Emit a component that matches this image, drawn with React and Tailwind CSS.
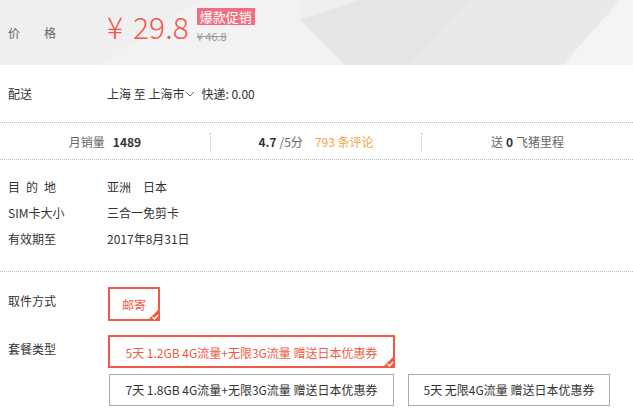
import React from "react";

function Check() {
  return (
    <svg className="absolute right-[-2px] bottom-[-2px]" width="13" height="13" viewBox="0 0 13 13">
      <polygon points="13,0 13,13 0,13" fill="#f05a45" />
      <polyline points="5.5,9 7.5,11 11,7" fill="none" stroke="#fff" strokeWidth="1.3" />
    </svg>
  );
}

export default function App() {
  return (
    <div className="w-[633px] h-[412px] bg-white overflow-hidden [font-family:'Noto_Sans_CJK_SC','Microsoft_YaHei',sans-serif] text-[12px] text-[#333]">
      {/* price header */}
      <div className="relative h-[65px] bg-[#efefef]">
        <svg className="absolute inset-0" width="633" height="65" viewBox="0 0 633 65">
          <polygon points="100,65 200,0 300,0 300,20 345,65" fill="#f2f2f2" />
          <polygon points="300,20 360,0 470,0 410,65 345,65" fill="#e5e5e5" />
          <polygon points="470,0 620,0 563,65 410,65" fill="#e9e9e9" />
          <polygon points="620,0 633,0 633,65 563,65" fill="#f4f4f4" />
        </svg>
        <div className="relative flex items-center h-full pl-2">
          <div className="w-[99px] text-[#666] flex">
            <span>价</span>
            <span className="ml-6">格</span>
          </div>
          <div className="flex items-center mb-[14px]">
            <div className="flex items-center text-[#f2584a] text-[30px] font-light leading-none">
              <span>¥</span>
              <span className="ml-[10px]">29.8</span>
            </div>
            <div className="ml-[8px] flex flex-col items-start">
              <span className="bg-[#ef6f80] text-white text-[13px] leading-[17px] px-[3px]">爆款促销</span>
              <span className="text-[11px] text-[#999] line-through mt-[4px] leading-[14px]">¥ 46.8</span>
            </div>
          </div>
        </div>
      </div>

      {/* delivery */}
      <div className="flex items-center h-[58px] pl-2 border-b border-dotted border-[#bbb]">
        <div className="w-[99px] text-[#333]">配送</div>
        <div className="flex items-center text-[#333]">
          <span>上海 至 上海市</span>
          <svg width="10" height="10" viewBox="0 0 10 10" className="ml-[1px]">
            <polyline points="1,3 5,7 9,3" fill="none" stroke="#666" strokeWidth="1" />
          </svg>
          <span className="ml-[6px]">快递: 0.00</span>
        </div>
      </div>

      {/* stats */}
      <div className="grid grid-cols-3 h-[37px] border-b border-dotted border-[#bbb] text-[#666]">
        <div className="flex items-center justify-center border-r border-dotted border-[#bbb] my-[10px]">
          <span>月销量</span>
          <span className="ml-[8px] font-bold text-[#333]">1489</span>
        </div>
        <div className="flex items-center justify-center border-r border-dotted border-[#bbb] my-[10px]">
          <span className="font-bold text-[#333]">4.7</span>
          <span className="ml-[3px]">/5分</span>
          <span className="ml-[12px] text-[#f5a33a]">793 条评论</span>
        </div>
        <div className="flex items-center justify-center my-[10px]">
          <span>送</span>
          <span className="mx-[3px] font-bold text-[#333]">0</span>
          <span>飞猪里程</span>
        </div>
      </div>

      {/* info */}
      <div className="pt-[14px] pb-[19px] pl-2 border-b border-dotted border-[#bbb] leading-[26px]">
        <div className="flex">
          <div className="w-[99px] text-[#333] flex gap-[6px]"><span>目</span><span>的</span><span>地</span></div>
          <div className="flex gap-[12px]"><span>亚洲</span><span>日本</span></div>
        </div>
        <div className="flex">
          <div className="w-[99px] text-[#333]">SIM卡大小</div>
          <div>三合一免剪卡</div>
        </div>
        <div className="flex">
          <div className="w-[99px] text-[#333]">有效期至</div>
          <div>2017年8月31日</div>
        </div>
      </div>

      {/* options */}
      <div className="pt-[15px] pl-2">
        <div className="flex">
          <div className="w-[100px] mt-[6px] leading-[16px]">取件方式</div>
          <div className="relative w-[52px] h-[34px] border-2 border-[#f05a45] text-[#f05a45] flex items-center justify-center pt-[2px]">
            邮寄
            <Check />
          </div>
        </div>
        <div className="flex mt-[14px]">
          <div className="w-[100px] mt-[6px] leading-[16px] shrink-0">套餐类型</div>
          <div className="flex flex-wrap gap-x-[14px] gap-y-[6px] w-[525px]">
            <div className="relative w-[287px] h-[33px] border-2 border-[#f05a45] text-[#f05a45] flex items-center justify-center pt-[2px]">
              5天 1.2GB 4G流量+无限3G流量 赠送日本优惠券
              <Check />
            </div>
            <div className="w-[285px] h-[32px] ml-[1px] border border-[#aaa] flex items-center justify-center">
              7天 1.8GB 4G流量+无限3G流量 赠送日本优惠券
            </div>
            <div className="w-[202px] h-[32px] border border-[#aaa] flex items-center justify-center">
              5天 无限4G流量 赠送日本优惠券
            </div>
          </div>
        </div>
      </div>
    </div>
  );
}
